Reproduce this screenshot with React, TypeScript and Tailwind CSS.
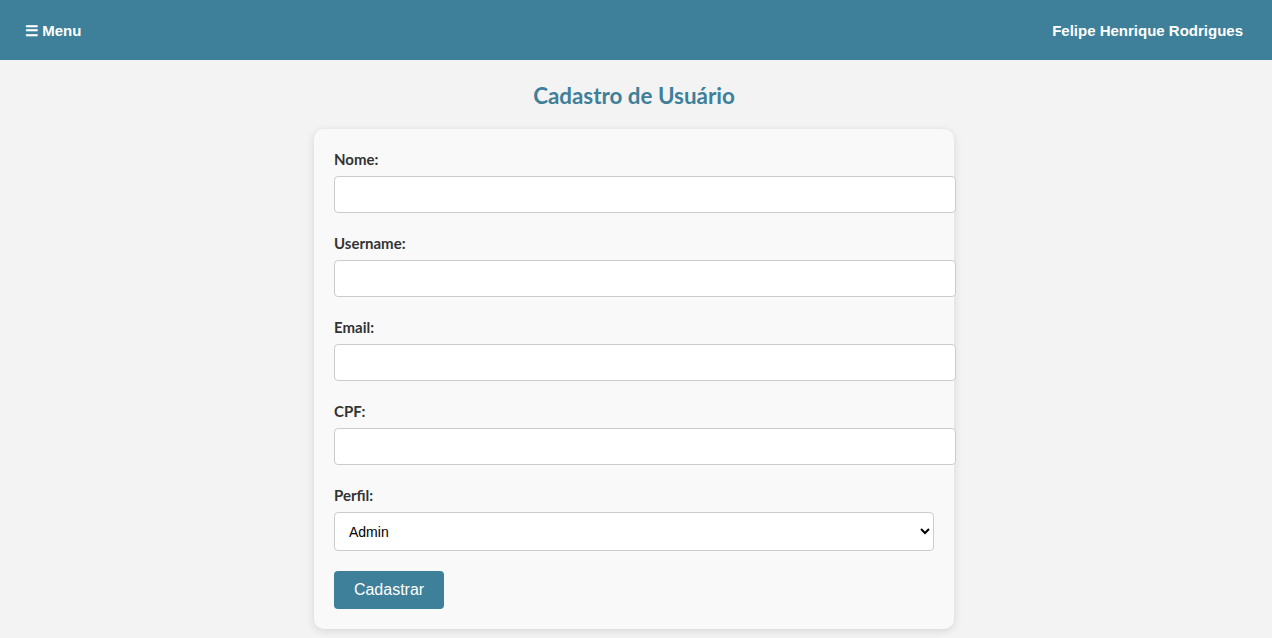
import React from "react";

const fields = ["Nome:", "Username:", "Email:", "CPF:"];

export default function App() {
    return (
        <div className="min-h-[638px] bg-[#f3f3f3] font-['Liberation_Sans',Arial,sans-serif]">
            <header className="h-[60px] bg-[#3e8099] flex items-center justify-between pl-[25px] pr-[29px] pt-[2px] text-white font-bold text-[15px]">
                <span>☰ Menu</span>
                <span>Felipe Henrique Rodrigues</span>
            </header>

            <main className="pr-[4px]">
                <h1 className="mt-[23px] text-center text-[22.4px] leading-[26px] font-bold text-[#3e8099] font-['Lato','Noto_Sans',sans-serif]">
                    Cadastro de Usuário
                </h1>

                <form className="mx-auto mt-[20px] w-[640px] rounded-[10px] bg-[#f9f9f9] p-5 shadow-[0_2px_8px_rgba(0,0,0,0.12)] flex flex-col gap-5">
                    {fields.map((label) => (
                        <div key={label} className="flex flex-col">
                            <label className="text-[15px] leading-5 font-bold text-[#333] mb-[7px] font-['Lato','Noto_Sans',sans-serif]">
                                {label}
                            </label>
                            <input
                                type="text"
                                className="box-content w-[600px] h-[15px] px-[10px] py-[10px] border border-[#ccc] rounded-[4px] bg-white text-[14px] outline-none"
                            />
                        </div>
                    ))}
                    <div className="flex flex-col">
                        <label className="text-[15px] leading-5 font-bold text-[#333] mb-[7px] font-['Lato','Noto_Sans',sans-serif]">
                            Perfil:
                        </label>
                        <select className="w-[600px] h-[39px] px-[10px] border border-[#ccc] rounded-[4px] bg-white text-[14px] text-black">
                            <option>Admin</option>
                            <option>Usuário</option>
                        </select>
                    </div>
                    <div>
                        <button
                            type="button"
                            className="w-[110px] h-[38px] rounded-[4px] bg-[#3e8099] text-white text-[16px]"
                        >
                            Cadastrar
                        </button>
                    </div>
                </form>
            </main>
        </div>
    );
}
